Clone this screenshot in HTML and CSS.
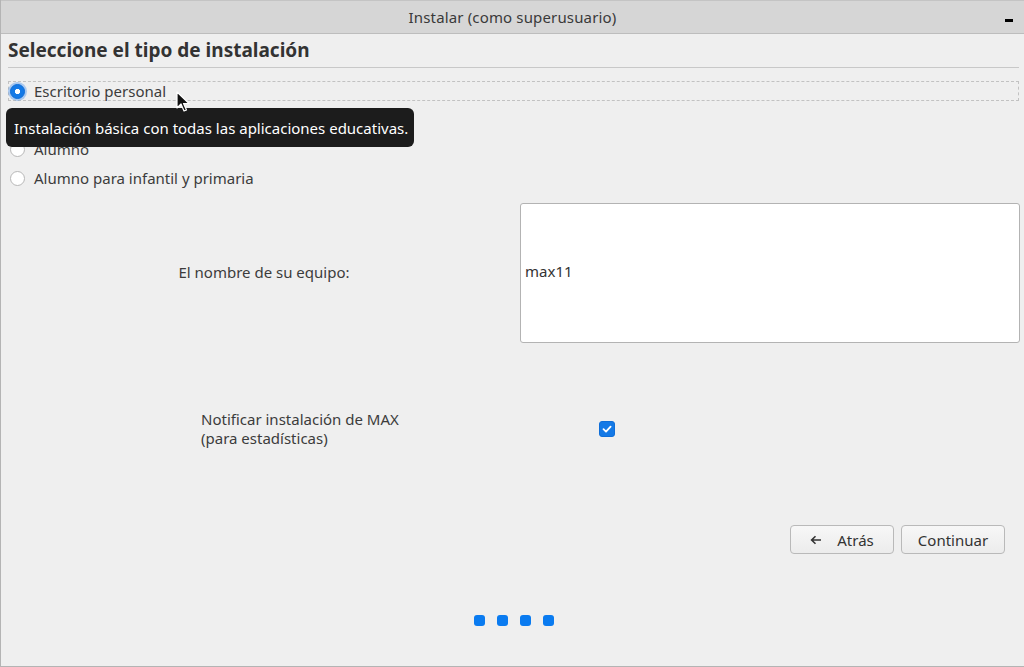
FILE: index.html
```html
<!DOCTYPE html>
<html lang="es">
<head>
<meta charset="utf-8">
<title>Instalar (como superusuario)</title>
<link rel="stylesheet" href="styles.css">
</head>
<body>
<div class="window">
  <header class="titlebar">
    <span class="title">Instalar (como superusuario)</span>
    <span class="minimize"></span>
  </header>
  <main class="content">
    <h1 class="heading">Seleccione el tipo de instalación</h1>
    <div class="options">
      <label class="option focused"><span class="radio checked"></span><span>Escritorio personal</span></label>
      <label class="option"><span class="radio"></span><span>Profesor</span></label>
      <label class="option"><span class="radio"></span><span>Alumno</span></label>
      <label class="option"><span class="radio"></span><span>Alumno para infantil y primaria</span></label>
      <div class="tooltip">Instalación básica con todas las aplicaciones educativas.</div>
      <svg class="cursor" width="14" height="22" viewBox="0 0 14 22"><path d="M1 1 L1 17 L5 13 L8 20 L10.5 19 L7.5 12.5 L13 12.5 Z" fill="#111" stroke="#fff" stroke-width="1.2" stroke-linejoin="round"/></svg>
    </div>
    <div class="name-row">
      <span class="name-label">El nombre de su equipo:</span>
      <div class="entry">max11</div>
    </div>
    <div class="notify-row">
      <span class="notify-label">Notificar instalación de MAX<br>(para estadísticas)</span>
      <span class="checkbox"><svg width="12" height="12" viewBox="0 0 12 12"><path d="M2.5 6.2 L5 8.6 L9.6 3.6" fill="none" stroke="#fff" stroke-width="1.8" stroke-linecap="round" stroke-linejoin="round"/></svg></span>
    </div>
    <div class="buttons">
      <button class="btn"><svg width="12" height="10" viewBox="0 0 12 10"><path d="M11 5 H2 M5.5 1.2 L1.6 5 L5.5 8.8" fill="none" stroke="#333" stroke-width="1.6"/></svg><span>Atrás</span></button>
      <button class="btn">Continuar</button>
    </div>
    <div class="dots"><span></span><span></span><span></span><span></span></div>
  </main>
</div>
</body>
</html>
```

FILE: styles.css
```css
* { box-sizing: border-box; }
html, body { margin: 0; padding: 0; }
body {
  width: 1024px;
  height: 667px;
  overflow: hidden;
  background: #efefef;
  font-family: "Noto Sans", "Open Sans", sans-serif;
  color: #3c3c3c;
  font-size: 15px;
}
.window {
  width: 1024px;
  height: 667px;
  border-left: 1px solid #b4b4b4;
  border-bottom: 1px solid #b4b4b4;
  display: flex;
  flex-direction: column;
}
.titlebar {
  height: 34px;
  flex: none;
  background: #d6d6d6;
  border-bottom: 1px solid #bdbdbd;
  border-top: 1px solid #c4c4c4;
  display: flex;
  align-items: center;
  justify-content: center;
  position: relative;
}
.title {
  font-size: 15px;
  color: #3a3a3a;
  letter-spacing: 0.15px;
}
.minimize {
  position: absolute;
  right: 11px;
  top: 18px;
  width: 8px;
  height: 3px;
  background: #000;
}
.content {
  flex: 1;
  padding: 0 5px 0 7px;
  display: flex;
  flex-direction: column;
}
.heading {
  margin: 0;
  font-size: 19px;
  font-weight: bold;
  color: #333;
  height: 34px;
  line-height: 32px;
  border-bottom: 1px solid #c8c8c8;
}
.options {
  position: relative;
  margin-top: 13px;
  display: flex;
  flex-direction: column;
  gap: 9px;
}
.option {
  height: 20px;
  display: flex;
  align-items: center;
  gap: 9px;
  padding-left: 0;
  border: 1px solid transparent;
}
.option.focused {
  border: 1px dashed #c2c2c2;
}
.radio {
  width: 15px;
  height: 15px;
  border-radius: 50%;
  border: 1px solid #b7b7b7;
  background: #fff;
  flex: none;
  margin-left: 1px;
}
.radio.checked {
  background: #1479e6 radial-gradient(circle, #fff 0 2.4px, transparent 2.9px);
  border-color: #0f6ed8;
  box-shadow: 0 0 0 2px rgba(40, 130, 240, 0.35);
}
.tooltip {
  position: absolute;
  left: -2px;
  top: 27px;
  width: 408px;
  height: 39px;
  background: #1c1c1c;
  color: #fff;
  border-radius: 6px;
  display: flex;
  align-items: center;
  padding-left: 8px;
}
.cursor {
  position: absolute;
  left: 168px;
  top: 10px;
}
.name-row {
  margin-top: 15px;
  display: grid;
  grid-template-columns: 512px 500px;
  align-items: center;
}
.name-label {
  text-align: center;
  padding-bottom: 2px;
}
.entry {
  height: 140px;
  background: #fff;
  border: 1px solid #b3b3b3;
  border-radius: 3px;
  display: flex;
  align-items: center;
  padding-left: 4px;
  padding-bottom: 5px;
  color: #333;
}
.notify-row {
  margin-top: 67px;
  padding-left: 193px;
  display: grid;
  grid-template-columns: 398px auto;
  align-items: center;
}
.notify-label {
  line-height: 19px;
}
.checkbox {
  width: 16px;
  height: 16px;
  border-radius: 3px;
  background: #1479e6;
  border: 1px solid #0f6ed8;
  display: flex;
  align-items: center;
  justify-content: center;
}
.buttons {
  margin-top: 77px;
  display: flex;
  justify-content: flex-end;
  gap: 7px;
  padding-right: 14px;
}
.btn {
  width: 104px;
  height: 29px;
  border: 1px solid #b9b9b9;
  border-radius: 4px;
  background: linear-gradient(#f7f7f7, #ececec);
  font-family: inherit;
  font-size: 15px;
  color: #333;
  display: flex;
  align-items: center;
  justify-content: center;
  gap: 15px;
  padding: 0;
}
.dots {
  margin-top: 61px;
  display: flex;
  justify-content: center;
  gap: 12px;
  padding-left: 0;
}
.dots span {
  width: 11px;
  height: 11px;
  border-radius: 3px;
  background: #0a7bf0;
}
```
